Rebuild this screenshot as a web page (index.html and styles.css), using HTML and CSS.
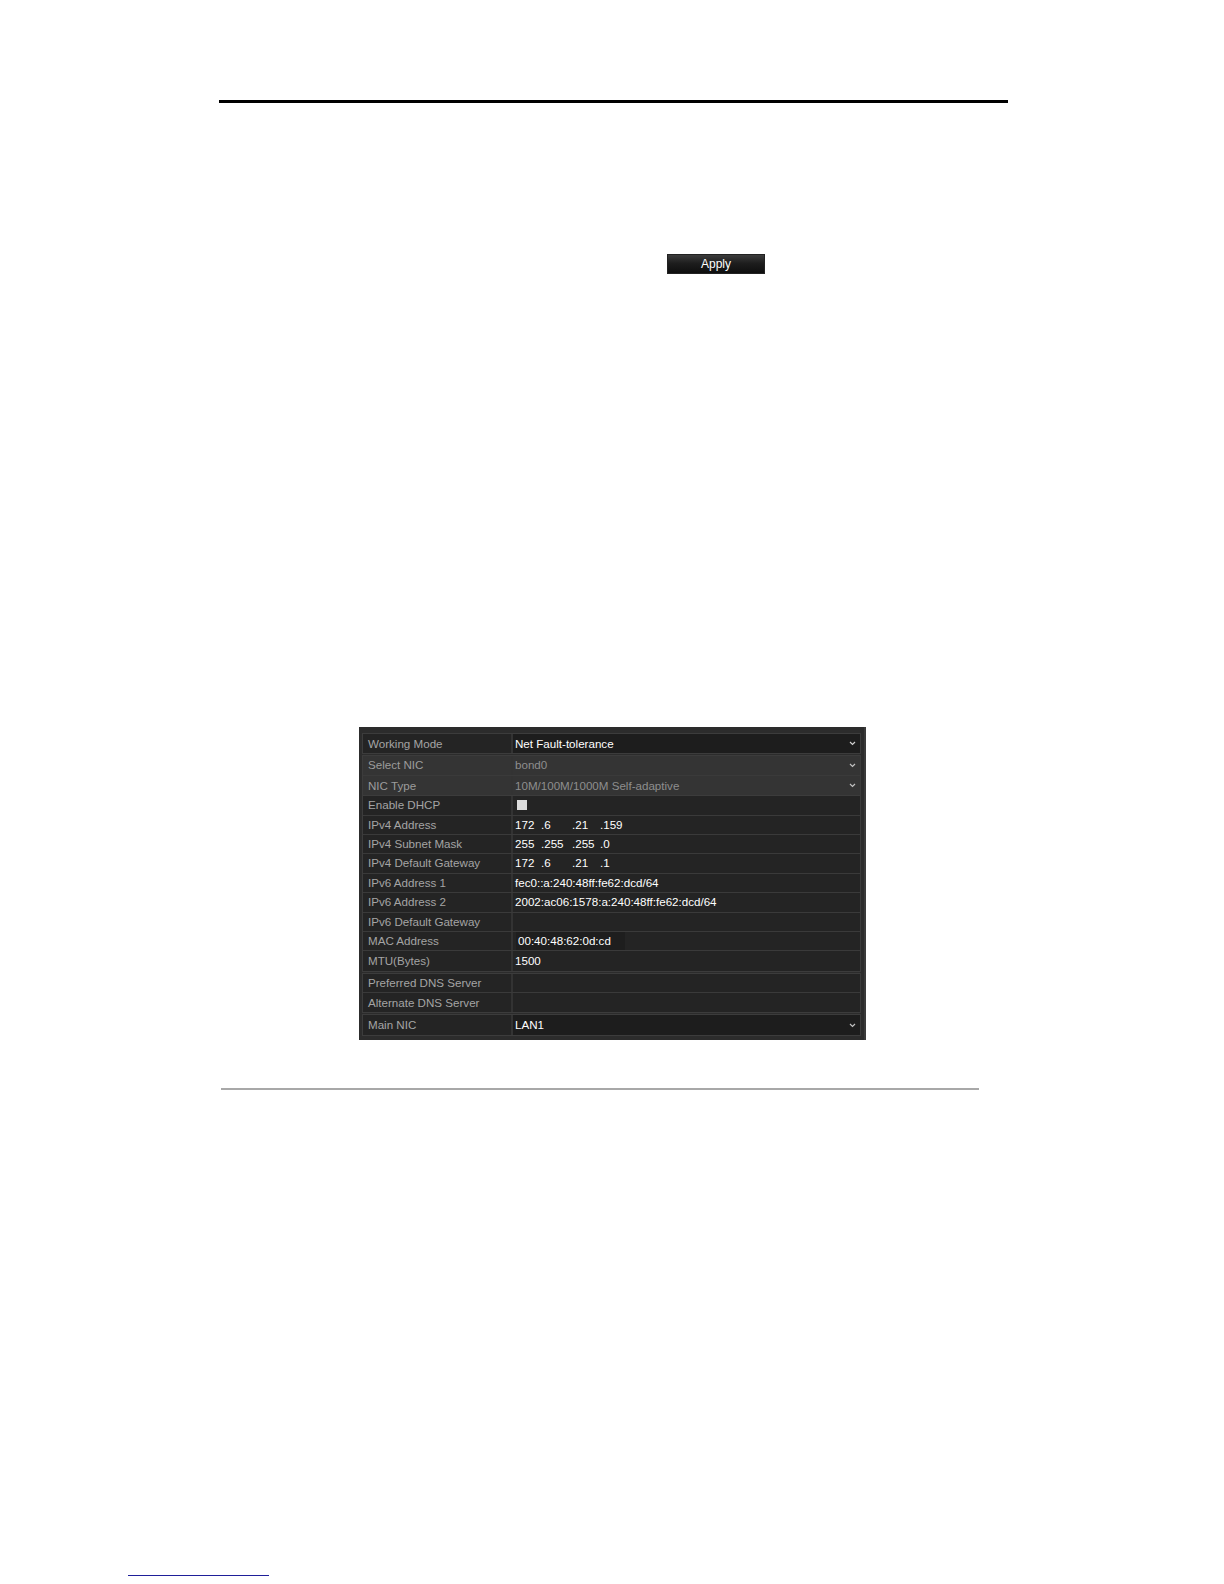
FILE: index.html
```html
<!DOCTYPE html>
<html>
<head>
<meta charset="utf-8">
<link rel="stylesheet" href="styles.css">
</head>
<body>
<div class="top-rule"></div>
<div class="apply-row"><span class="apply-btn">Apply</span></div>

<div class="panel">
  <div class="group g-mode">
    <div class="row">
      <div class="label">Working Mode</div>
      <div class="value select"><span>Net Fault-tolerance</span><svg class="chev" width="7" height="5" viewBox="0 0 7 5"><path d="M1 1 L3.5 3.5 L6 1" fill="none" stroke="#d0d0d0" stroke-width="1.2"/></svg></div>
    </div>
  </div>

  <div class="group disabled g-nic">
    <div class="row">
      <div class="label">Select NIC</div>
      <div class="value select"><span>bond0</span><svg class="chev" width="7" height="5" viewBox="0 0 7 5"><path d="M1 1 L3.5 3.5 L6 1" fill="none" stroke="#c0c0c0" stroke-width="1.2"/></svg></div>
    </div>
    <div class="row">
      <div class="label">NIC Type</div>
      <div class="value select"><span>10M/100M/1000M Self-adaptive</span><svg class="chev" width="7" height="5" viewBox="0 0 7 5"><path d="M1 1 L3.5 3.5 L6 1" fill="none" stroke="#c0c0c0" stroke-width="1.2"/></svg></div>
    </div>
  </div>

  <div class="group g-ip">
    <div class="row">
      <div class="label">Enable DHCP</div>
      <div class="value"><span class="checkbox"></span></div>
    </div>
    <div class="row">
      <div class="label">IPv4 Address</div>
      <div class="value"><span class="seg s1">172</span><span class="seg s2">.6</span><span class="seg s3">.21</span><span class="seg">.159</span></div>
    </div>
    <div class="row">
      <div class="label">IPv4 Subnet Mask</div>
      <div class="value"><span class="seg s1">255</span><span class="seg s2">.255</span><span class="seg s3">.255</span><span class="seg">.0</span></div>
    </div>
    <div class="row">
      <div class="label">IPv4 Default Gateway</div>
      <div class="value"><span class="seg s1">172</span><span class="seg s2">.6</span><span class="seg s3">.21</span><span class="seg">.1</span></div>
    </div>
    <div class="row">
      <div class="label">IPv6 Address 1</div>
      <div class="value">fec0::a:240:48ff:fe62:dcd/64</div>
    </div>
    <div class="row">
      <div class="label">IPv6 Address 2</div>
      <div class="value">2002:ac06:1578:a:240:48ff:fe62:dcd/64</div>
    </div>
    <div class="row">
      <div class="label">IPv6 Default Gateway</div>
      <div class="value"></div>
    </div>
    <div class="row">
      <div class="label">MAC Address</div>
      <div class="value"><span class="mac">00:40:48:62:0d:cd</span></div>
    </div>
    <div class="row">
      <div class="label">MTU(Bytes)</div>
      <div class="value">1500</div>
    </div>
  </div>

  <div class="group g-dns">
    <div class="row">
      <div class="label">Preferred DNS Server</div>
      <div class="value"></div>
    </div>
    <div class="row">
      <div class="label">Alternate DNS Server</div>
      <div class="value"></div>
    </div>
  </div>

  <div class="group g-main">
    <div class="row">
      <div class="label">Main NIC</div>
      <div class="value select"><span>LAN1</span><svg class="chev" width="7" height="5" viewBox="0 0 7 5"><path d="M1 1 L3.5 3.5 L6 1" fill="none" stroke="#c0c0c0" stroke-width="1.2"/></svg></div>
    </div>
  </div>
</div>

<div class="bottom-rule"></div>
<div class="footer-link"></div>
</body>
</html>
```

FILE: styles.css
```css
html, body {
  margin: 0;
  padding: 0;
  background: #ffffff;
}

body {
  font-family: "Liberation Sans", Arial, sans-serif;
  width: 1224px;
}

.top-rule {
  margin: 100px 0 0 219px;
  width: 789px;
  height: 3px;
  background: #000000;
}

.apply-row {
  margin: 151px 0 0 667px;
  height: 20px;
}

.apply-btn {
  display: flex;
  align-items: center;
  justify-content: center;
  width: 98px;
  height: 20px;
  background: linear-gradient(#3c3c3c 0%, #1e1e1e 45%, #0e0e0e 100%);
  color: #ffffff;
  font-size: 12px;
  box-sizing: border-box;
  border: 1px solid #222;
}

.panel {
  margin: 453px 0 0 359px;
  width: 507px;
  box-sizing: border-box;
  background: #2c2c2c;
  padding: 6px 3px 4px 3px;
  border-right: 2px solid #3a3a3a;
}

.group {
  border: 1px solid #3c3c3c;
  background: #333333;
}

.g-mode { margin-bottom: 1px; }
.g-nic { border-bottom: none; }
.g-ip { margin-bottom: 1px; }
.g-dns { margin-bottom: 1px; }

.row {
  display: grid;
  grid-template-columns: 148px 1fr;
  column-gap: 2px;
  height: 18.4px;
  border-bottom: 1px solid #3a3a3a;
  font-size: 11.6px;
  line-height: 18.4px;
}

.group .row:last-child {
  height: 19.4px;
  line-height: 19.4px;
  border-bottom: none;
}

.label {
  background: #242424;
  color: #a4a4a4;
  padding-left: 5px;
  white-space: nowrap;
  overflow: hidden;
}

.value {
  background: #242424;
  color: #ffffff;
  padding-left: 2px;
  white-space: nowrap;
  overflow: hidden;
}

.select {
  display: flex;
  align-items: center;
  justify-content: space-between;
  padding-right: 4px;
  background: #1d1d1d;
}

.chev {
  display: block;
}

.disabled .label,
.disabled .value {
  background: #343434;
  color: #8e8e8e;
}

.disabled .label {
  color: #9c9c9c;
}

.checkbox {
  display: inline-block;
  width: 10px;
  height: 10px;
  margin: 4px 0 0 2px;
  background: #dcdcdc;
  vertical-align: top;
}

.seg {
  display: inline-block;
}

.s1 { width: 26px; }
.s2 { width: 31px; }
.s3 { width: 28px; }

.mac {
  display: inline-block;
  background: #1e1e1e;
  padding: 0 14px 0 2px;
  margin-left: 1px;
}

.bottom-rule {
  margin: 48px 0 0 221px;
  width: 758px;
  height: 2px;
  background: #a8a8a8;
}

.footer-link {
  margin: 485px 0 0 128px;
  width: 141px;
  height: 1px;
  background: #1f1f99;
}
```
